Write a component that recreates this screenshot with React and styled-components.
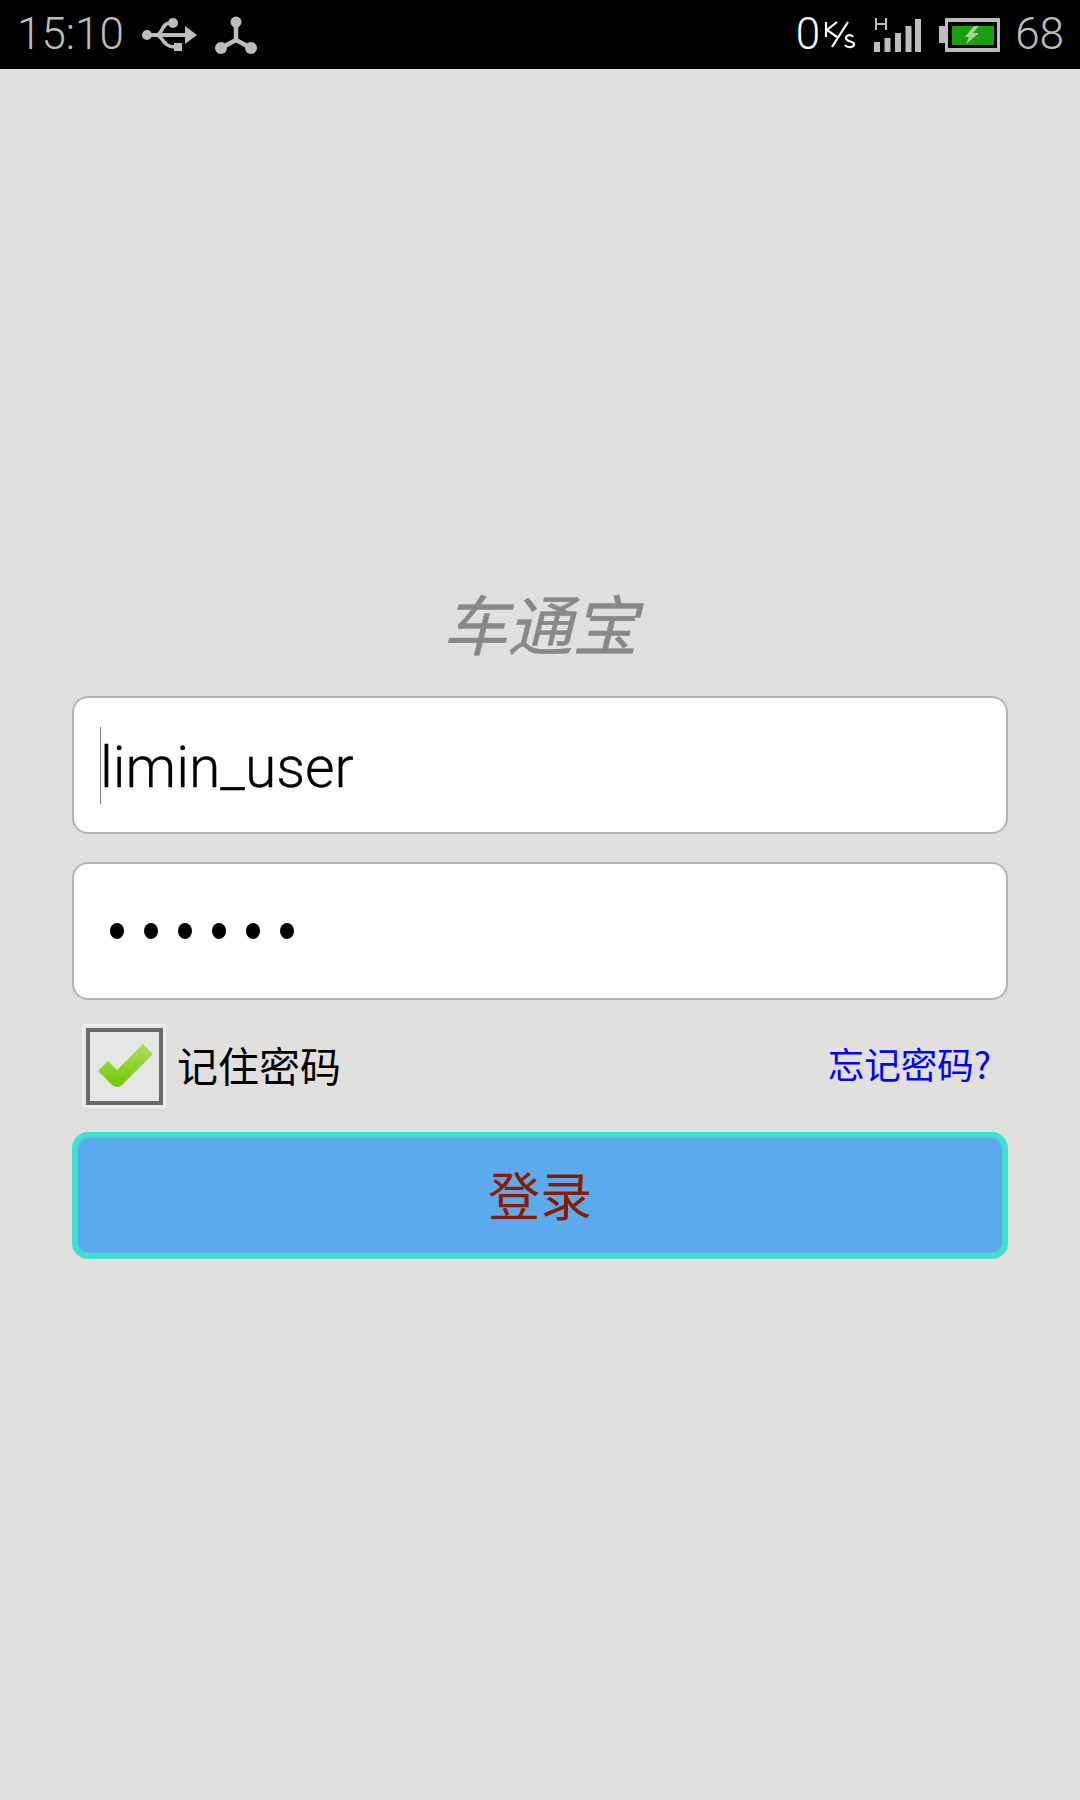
import React from "react";
import styled, { createGlobalStyle } from "styled-components";

const Global = createGlobalStyle`
  html, body { margin: 0; padding: 0; background: #e1e0de; }
  body { font-family: Roboto, "Noto Sans CJK SC", sans-serif; }
`;

const Page = styled.div`
  width: 1080px;
  height: 1800px;
  background: #e1e0de;
  display: flex;
  flex-direction: column;
  overflow: hidden;
`;

const StatusBar = styled.div`
  height: 69px;
  background: #000;
  display: flex;
  align-items: center;
  justify-content: space-between;
  padding: 0 16px 0 17px;
  flex: none;
`;

const StatusGroup = styled.div`
  display: flex;
  align-items: center;
`;

const StatusText = styled.span`
  font-family: Roboto, sans-serif;
  font-weight: 300;
  font-size: 44px;
  line-height: 69px;
  margin-left: ${(p) => p.$ml || 0}px;
  color: ${(p) => (p.$white ? "#fff" : "#bdbdbd")};
`;

const Glyph = styled.svg`
  display: block;
  flex: none;
  margin-left: ${(p) => p.$ml || 0}px;
`;

const Form = styled.main`
  display: flex;
  flex-direction: column;
  padding: 513px 72px 0;
`;

const Title = styled.h1`
  margin: 0 0 34px;
  height: 80px;
  text-align: center;
  font-family: "Noto Sans CJK SC", sans-serif;
  font-size: 65px;
  font-weight: 400;
  font-style: italic;
  line-height: 80px;
  color: #888888;
  -webkit-text-stroke: 0.5px #888888;
`;

const Field = styled.div`
  box-sizing: border-box;
  height: 138px;
  margin-bottom: ${(p) => p.$mb || 0}px;
  background: #fff;
  border: 2px solid #b4b4b4;
  border-radius: 16px;
  display: flex;
  align-items: center;
  padding-left: 26px;
`;

const Caret = styled.span`
  width: 1px;
  height: 77px;
  background: #777;
  flex: none;
`;

const FieldText = styled.span`
  font-family: Roboto, sans-serif;
  font-weight: 300;
  font-size: 57px;
  color: #000;
  line-height: 77px;
  margin-left: -1px;
  padding-top: 4px;
  -webkit-text-stroke: 0.3px #000;
`;

const Dots = styled.div`
  display: flex;
  gap: 20px;
  padding-left: 10px;
`;

const Dot = styled.span`
  width: 14px;
  height: 16px;
  border-radius: 50%;
  background: #000;
`;

const OptionsRow = styled.div`
  display: flex;
  align-items: center;
  justify-content: space-between;
  height: 132px;
  padding: 0 16px 0 10px;
`;

const Remember = styled.label`
  display: flex;
  align-items: center;
  gap: 11px;
`;

const CheckBox = styled.span`
  box-sizing: border-box;
  width: 84px;
  height: 84px;
  display: flex;
  align-items: center;
  justify-content: center;
  background: #e6e6e5;
  border: 2px solid #efefee;
  border-radius: 3px;
`;

const CheckInner = styled.span`
  box-sizing: border-box;
  width: 77px;
  height: 77px;
  border: 4px solid #6a6a6a;
  display: flex;
  align-items: center;
  justify-content: center;
`;

const RememberText = styled.span`
  font-family: "Noto Sans CJK SC", sans-serif;
  font-size: 41px;
  line-height: 56px;
  padding-bottom: 4px;
  color: #000;
`;

const Forgot = styled.a`
  font-family: "Noto Sans CJK SC", sans-serif;
  font-size: 36.5px;
  line-height: 50px;
  padding-bottom: 4px;
  margin-right: 1px;
  color: #0000ff;
`;

const Login = styled.button`
  box-sizing: border-box;
  width: 100%;
  height: 127px;
  background: #5caaee;
  border: 6px solid #40e0d0;
  border-radius: 16px;
  font-family: "Noto Sans CJK SC", sans-serif;
  font-size: 52px;
  color: #8b1a00;
  padding: 0 0 4px;
`;

const CheckMark = styled.svg`
  display: block;
  filter: blur(0.7px);
`;

const Usb = () => (
  <Glyph $ml={18} width="56" height="36" viewBox="0 0 56 36">
    <g fill="#bdbdbd">
      <circle cx="5" cy="18" r="5" />
      <circle cx="31" cy="6" r="5" />
      <path d="M43 9L55 18L43 27Z" />
      <path d="M5 18H44" stroke="#bdbdbd" strokeWidth="4" fill="none" />
      <path d="M14 18C21 18 19 6 28 6" stroke="#bdbdbd" strokeWidth="3.5" fill="none" />
      <path d="M14 18C21 18 20 30 33 30" stroke="#bdbdbd" strokeWidth="3.5" fill="none" />
      <rect x="32" y="26" width="8" height="8" />
    </g>
  </Glyph>
);

const Hub = () => (
  <Glyph $ml={16} width="44" height="40" viewBox="0 0 44 40">
    <g fill="#bdbdbd">
      <circle cx="22" cy="7" r="5.5" />
      <circle cx="7" cy="33" r="6" />
      <circle cx="37" cy="33" r="6" />
      <path d="M22 7V25M22 25L7 33M22 25L37 33" stroke="#bdbdbd" strokeWidth="4.5" fill="none" />
    </g>
  </Glyph>
);

const Speed = () => (
  <Glyph $ml={4} width="32" height="30" viewBox="0 0 32 30">
    <g stroke="#fff" strokeWidth="2.2" fill="none">
      <path d="M2 2V17M13 2L3 10L13 17M24 2L8 27" />
      <path d="M29 17C27 14 22 15 22 18C22 22 30 21 30 24C30 28 23 28 21 25" />
    </g>
  </Glyph>
);

const Signal = () => (
  <Glyph $ml={18} width="48" height="36" viewBox="0 0 48 36">
    <g fill="#bdbdbd">
      <path d="M2 1V13M12 1V13M2 7H12" stroke="#bdbdbd" strokeWidth="2" fill="none" />
      <rect x="0" y="25" width="6" height="10" />
      <rect x="10.5" y="21" width="6" height="14" />
      <rect x="21" y="16" width="6" height="19" />
      <rect x="31.5" y="9" width="6" height="26" />
      <rect x="41" y="2" width="6" height="33" />
    </g>
  </Glyph>
);

const Battery = () => (
  <Glyph $ml={17} width="62" height="36" viewBox="0 0 62 36">
    <rect x="0" y="9" width="7" height="17" fill="#bdbdbd" />
    <rect x="6" y="1" width="55" height="34" rx="1" fill="#bdbdbd" />
    <rect x="9" y="5" width="49" height="26" fill="#000" />
    <rect x="13" y="9" width="42" height="19" fill="#18a010" />
    <path d="M35 9L26 20H30L27 27L40 16H34L40 9Z" fill="#a9cfa0" />
  </Glyph>
);

const Check = () => (
  <CheckMark width="64" height="54" viewBox="0 0 64 54">
    <defs>
      <linearGradient id="g" x1="0" y1="0" x2="0" y2="1">
        <stop offset="0" stopColor="#a8dc58" />
        <stop offset="1" stopColor="#78cc10" />
      </linearGradient>
    </defs>
    <path
      d="M11 27L25 41L56 10"
      fill="none"
      stroke="url(#g)"
      strokeWidth="14"
      strokeLinejoin="round"
    />
  </CheckMark>
);

export default function App() {
  return (
    <Page>
      <Global />
      <StatusBar>
        <StatusGroup>
          <StatusText>15:10</StatusText>
          <Usb />
          <Hub />
        </StatusGroup>
        <StatusGroup>
          <StatusText $white>0</StatusText>
          <Speed />
          <Signal />
          <Battery />
          <StatusText $ml={14}>68</StatusText>
        </StatusGroup>
      </StatusBar>
      <Form>
        <Title>车通宝</Title>
        <Field $mb={28}>
          <Caret />
          <FieldText>limin_user</FieldText>
        </Field>
        <Field>
          <Dots>
            {[0, 1, 2, 3, 4, 5].map((i) => (
              <Dot key={i} />
            ))}
          </Dots>
        </Field>
        <OptionsRow>
          <Remember>
            <CheckBox>
              <CheckInner>
                <Check />
              </CheckInner>
            </CheckBox>
            <RememberText>记住密码</RememberText>
          </Remember>
          <Forgot>忘记密码?</Forgot>
        </OptionsRow>
        <Login>登录</Login>
      </Form>
    </Page>
  );
}
